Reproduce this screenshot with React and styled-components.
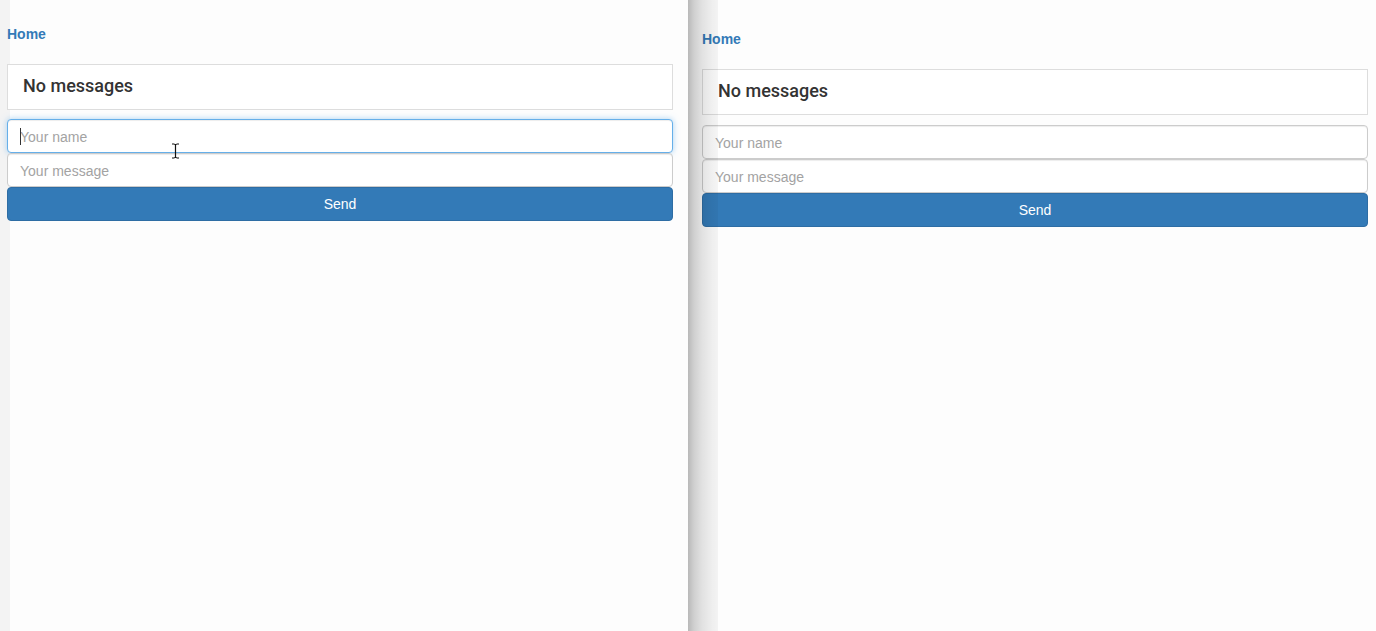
import React from 'react';
import styled, { createGlobalStyle, css } from 'styled-components';

const GlobalStyle = createGlobalStyle`
  html, body {
    margin: 0;
    padding: 0;
    height: 631px;
    overflow: hidden;
    background: #fdfdfd;
  }
  #root {
    height: 631px;
  }
  * {
    box-sizing: border-box;
  }
`;

const Desktop = styled.div`
  display: flex;
  height: 631px;
  font-family: "Liberation Sans", Arial, sans-serif;
  color: #333;
`;

const Pane = styled.div`
  position: relative;
  width: ${p => p.width}px;
  height: 100%;
  padding: ${p => p.top}px ${p => p.right}px 0 ${p => p.left}px;
  background: ${p => p.strip
    ? 'linear-gradient(to right, #f3f3f3 10px, #fdfdfd 10px)'
    : '#fdfdfd'};
  display: flex;
  flex-direction: column;
`;

const EdgeShadow = styled.div`
  position: absolute;
  top: 0;
  bottom: 0;
  left: 0;
  width: 30px;
  pointer-events: none;
  background: linear-gradient(to right,
    rgba(0, 0, 0, 0.27) 0px,
    rgba(0, 0, 0, 0.18) 6px,
    rgba(0, 0, 0, 0.11) 14px,
    rgba(0, 0, 0, 0.06) 24px,
    rgba(0, 0, 0, 0.04) 30px);
`;

const HomeLink = styled.a`
  display: block;
  font-size: 14px;
  line-height: 20px;
  font-weight: bold;
  color: #337ab7;
  text-decoration: none;
  margin-bottom: 20px;
`;

const Panel = styled.div`
  border: 1px solid #ddd;
  background: #fff;
  padding: 9px 15px 11px;
  margin-bottom: ${p => p.gap}px;
`;

const PanelTitle = styled.h4`
  margin: 0;
  font-family: Roboto, "Liberation Sans", Arial, sans-serif;
  font-size: 18px;
  line-height: 24px;
  font-weight: 500;
  color: #333;
`;

const Form = styled.div`
  display: flex;
  flex-direction: column;
`;

const FieldWrap = styled.div`
  position: relative;
`;

const Field = styled.input`
  display: block;
  width: 100%;
  height: 34px;
  padding: 7px 12px 5px;
  font-family: "Liberation Sans", Arial, sans-serif;
  font-size: 14px;
  color: #555;
  background: #fff;
  border: 1px solid #ccc;
  border-radius: 4px;
  box-shadow: inset 0 1px 1px rgba(0, 0, 0, 0.075);
  outline: none;
  &::placeholder {
    color: #a3a3a3;
  }
  ${p => p.focused && css`
    border-color: #66afe9;
    box-shadow: inset 0 1px 1px rgba(0, 0, 0, 0.075), 0 0 6px rgba(102, 175, 233, 0.55);
  `}
`;

const Caret = styled.span`
  position: absolute;
  left: 13px;
  top: 9px;
  width: 1px;
  height: 17px;
  background: #333;
`;

const SendButton = styled.button`
  height: 34px;
  width: 100%;
  font-family: "Liberation Sans", Arial, sans-serif;
  font-size: 14px;
  color: #fff;
  background: #337ab7;
  border: 1px solid #2e6da4;
  border-radius: 4px;
  cursor: pointer;
`;

const Pointer = styled.svg`
  position: absolute;
  left: 171px;
  top: 143px;
`;

const Chat = ({ focused, gap }) => (
  <>
    <HomeLink href="#">Home</HomeLink>
    <Panel gap={gap}>
      <PanelTitle>No messages</PanelTitle>
    </Panel>
    <Form>
      <FieldWrap>
        <Field placeholder="Your name" focused={focused} readOnly />
        {focused && <Caret />}
      </FieldWrap>
      <FieldWrap>
        <Field placeholder="Your message" readOnly />
      </FieldWrap>
      <SendButton>Send</SendButton>
    </Form>
  </>
);

export default function App() {
  return (
    <>
      <GlobalStyle />
      <Desktop>
        <Pane width={688} top={24} left={7} right={15} strip>
          <Chat focused gap={9} />
          <Pointer width="9" height="16" viewBox="0 0 9 16">
            <path d="M1 1h2.5M5.5 1H8M4.5 1.5v13M1 15h2.5M5.5 15H8M3.5 1.5h2M3.5 14.5h2"
              stroke="#111" strokeWidth="1.2" fill="none" />
          </Pointer>
        </Pane>
        <Pane width={688} top={29} left={14} right={8}>
          <Chat gap={10} />
          <EdgeShadow />
        </Pane>
      </Desktop>
    </>
  );
}
